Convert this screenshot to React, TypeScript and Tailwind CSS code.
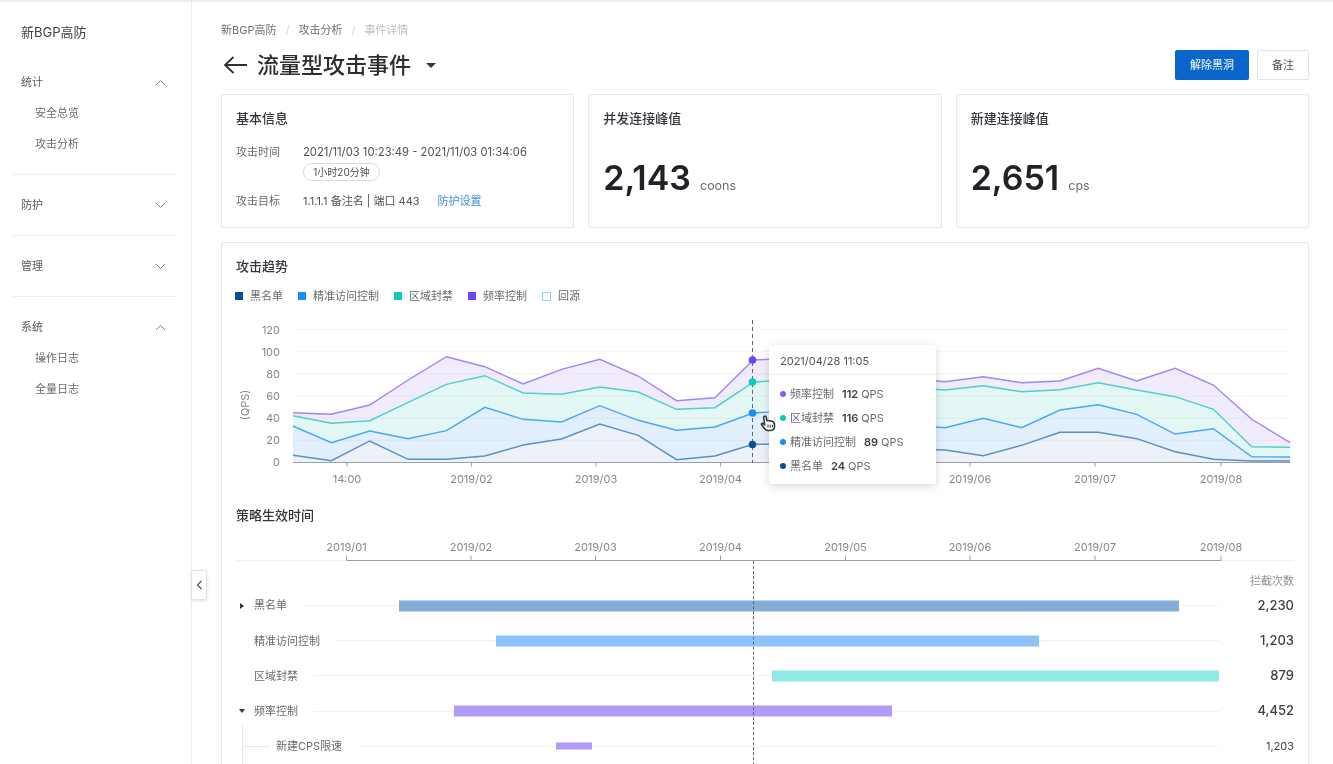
import React from "react";

const X = (i: number) => 293 + i * 38.35;
const BASE = 462.5;

const purple = [412.7, 414.3, 405, 380, 356.7, 366.7, 384, 369.3, 359.3, 376, 400.7, 397.7, 360, 358.3, 365, 372, 378, 381.7, 376.7, 382.7, 381, 368.3, 381, 368.3, 385, 419.3, 442.7];
const teal = [415.7, 423.3, 420.7, 402.3, 384.3, 375.7, 393, 394.3, 387, 392, 409.3, 407.7, 382.3, 379.3, 381, 385, 388, 390, 385.7, 391.7, 389.7, 382.7, 390, 396.7, 409.3, 446.7, 447.3];
const blue = [426, 442.7, 431, 438.7, 430.7, 407.3, 419.3, 422, 405.7, 420.3, 430.3, 427, 413, 410.7, 415, 420, 425, 427.7, 418.3, 427.7, 410, 404.7, 414.3, 434, 428.7, 456.7, 457];
const dark = [455.3, 460.7, 441, 459.3, 459.3, 456, 445, 439, 424, 435.3, 459.7, 456, 444.3, 444, 445, 447, 449, 450, 455.7, 445.3, 432.3, 432.3, 438.7, 451.7, 459.3, 461, 461];

const line = (a: number[]) => a.map((y, i) => `${X(i).toFixed(1)},${y}`).join(" ");
const area = (a: number[]) => `${X(0)},${BASE} ${line(a)} ${X(26).toFixed(1)},${BASE}`;

const series = [
  { data: purple, stroke: "#a582f7", fill: "#f1ecfc", dot: "#6d45f5" },
  { data: teal, stroke: "#4fcfca", fill: "#e3f8f5", dot: "#0ccbbd" },
  { data: blue, stroke: "#4aa5f7", fill: "#e2effd", dot: "#1a8cfb" },
  { data: dark, stroke: "#5b8fc4", fill: "#edf1f8", dot: "#0b4f96" },
];

const chartTicks = [
  { x: 347, t: "14:00" },
  { x: 471.5, t: "2019/02" },
  { x: 596, t: "2019/03" },
  { x: 720.5, t: "2019/04" },
  { x: 845, t: "2019/05" },
  { x: 970, t: "2019/06" },
  { x: 1095, t: "2019/07" },
  { x: 1221, t: "2019/08" },
];
const ganttTicks = [
  { x: 346.5, t: "2019/01" },
  { x: 471, t: "2019/02" },
  { x: 595.5, t: "2019/03" },
  { x: 720.5, t: "2019/04" },
  { x: 845.5, t: "2019/05" },
  { x: 970, t: "2019/06" },
  { x: 1095, t: "2019/07" },
  { x: 1221, t: "2019/08" },
];

const legend = [
  { t: "黑名单", c: "w-[8px] h-[8px] bg-[#0b4f96]" },
  { t: "精准访问控制", c: "w-[8px] h-[8px] bg-[#1a8cfb]" },
  { t: "区域封禁", c: "w-[8px] h-[8px] bg-[#0ccbbd]" },
  { t: "频率控制", c: "w-[8px] h-[8px] bg-[#6d45f5]" },
  { t: "回源", c: "w-[9px] h-[9px] bg-white border border-[#7fdcf0]" },
];

const tips = [
  { t: "频率控制", v: "112", c: "bg-[#8a5cf6]" },
  { t: "区域封禁", v: "116", c: "bg-[#0ccbbd]" },
  { t: "精准访问控制", v: "89", c: "bg-[#1a8cfb]" },
  { t: "黑名单", v: "24", c: "bg-[#0b4f96]" },
];

const rows = [
  { label: "黑名单", caret: "right", from: 399, to: 1179, color: "#85aed6", value: "2,230", h: 11 },
  { label: "精准访问控制", from: 496, to: 1039, color: "#8cc3fb", value: "1,203", h: 11 },
  { label: "区域封禁", from: 772, to: 1219, color: "#8fe9e4", value: "879", h: 11 },
  { label: "频率控制", caret: "down", from: 453.5, to: 892, color: "#b09bfa", value: "4,452", h: 11 },
  { label: "新建CPS限速", child: true, from: 556, to: 592, color: "#b09bfa", value: "1,203", h: 7 },
];

function Chevron({ up }: { up?: boolean }) {
  return (
    <svg width="11" height="7" viewBox="0 0 11 7" fill="none" stroke="#7a7f87" strokeWidth="1">
      <path d={up ? "M1 6 L5.5 1.5 L10 6" : "M1 1 L5.5 5.5 L10 1"} />
    </svg>
  );
}

function MenuGroup({ title, open, items, last, first }: { title: string; open?: boolean; items?: string[]; last?: boolean; first?: boolean }) {
  return (
    <div className={`${first ? "pt-[14px]" : "pt-[15px]"} pb-[14px] ${last ? "" : "border-b border-[#eceef1]"}`}>
      <div className="h-[31px] flex items-center justify-between pl-[8px] pr-[10px] text-[11px] text-[#555a61]">
        <span>{title}</span>
        <Chevron up={open} />
      </div>
      {items?.map((s) => (
        <div key={s} className="h-[31px] flex items-center pl-[22px] text-[11px] text-[#666b72]">
          {s}
        </div>
      ))}
    </div>
  );
}

function Card({ title, children }: { title: string; children: React.ReactNode }) {
  return (
    <div className="h-[134px] rounded-[3px] border border-[#e6e8eb] shadow-[0_0_1px_#e6e8eb] px-[14px] pt-[13px] bg-white">
      <div className="h-[20px] leading-[20px] text-[13px] font-medium text-[#33373d]">{title}</div>
      {children}
    </div>
  );
}

function Stat({ title, value, unit }: { title: string; value: string; unit: string }) {
  return (
    <Card title={title}>
      <div className="mt-[31px] flex items-baseline gap-[9px]">
        <span className="text-[34px] leading-[38px] font-semibold text-[#1f2226]">{value}</span>
        <span className="text-[12.5px] text-[#666b72]">{unit}</span>
      </div>
    </Card>
  );
}

export default function App() {
  return (
    <div className="w-[1333px] h-[764px] overflow-hidden bg-white relative blur-[0.6px] font-['Inter','Noto_Sans_CJK_SC',sans-serif] border-t-2 border-[#ececec]">
      <div className="flex h-full">
        <aside className="w-[192px] shrink-0 border-r border-[#eceef1] pl-[13px] pr-[15px]">
          <div className="pt-[20px] pb-[8px] pl-[8px] h-[51px] leading-[20px] text-[13px] text-[#3d4147]">新BGP高防</div>
          <MenuGroup first title="统计" open items={["安全总览", "攻击分析"]} />
          <MenuGroup title="防护" />
          <MenuGroup title="管理" />
          <MenuGroup title="系统" open items={["操作日志", "全量日志"]} last />
        </aside>

        <main className="w-[1117px] pl-[29px] shrink-0">
          <div className="pt-[21px] h-[35px] flex items-center gap-[9px] text-[11px] text-[#6a6f76]">
            <span>新BGP高防</span>
            <span className="text-[#cfd2d6]">/</span>
            <span>攻击分析</span>
            <span className="text-[#d5d7da]">/</span>
            <span className="text-[#bcbfc4]">事件详情</span>
          </div>

          <div className="mt-[11px] h-[34px] flex items-center justify-between">
            <div className="flex items-center">
              <svg width="26" height="20" viewBox="0 0 26 20" fill="none" stroke="#2b2e33" strokeWidth="1.8" className="ml-[2px]">
                <path d="M24 10 H2 M10.5 2 L2 10 L10.5 18" />
              </svg>
              <span className="ml-[8px] text-[22px] font-medium text-[#2b2e33]">流量型攻击事件</span>
              <span className="ml-[15px] w-0 h-0 border-l-[5px] border-r-[5px] border-t-[5px] border-l-transparent border-r-transparent border-t-[#33373d]" />
            </div>
            <div className="flex gap-[8px]">
              <button className="w-[74px] h-[30px] rounded-[2px] bg-[#0b66cc] text-white text-[11px]">解除黑洞</button>
              <button className="w-[52px] h-[30px] rounded-[2px] bg-white border border-[#e1e3e7] text-[#4a4e55] text-[11px]">备注</button>
            </div>
          </div>

          <div className="mt-[12px] grid grid-cols-3 gap-[14px]">
            <Card title="基本信息">
              <div className="mt-[17px] flex text-[11px] leading-[14px]">
                <span className="w-[67px] text-[#666b72]">攻击时间</span>
                <div className="text-[#4e5259]">
                  <div className="text-[11.25px]">2021/11/03 10:23:49 - 2021/11/03 01:34:06</div>
                  <div className="mt-[4px] h-[18px] w-[77px] flex items-center justify-center rounded-full border border-[#d9dbdf] text-[10px]">1小时20分钟</div>
                </div>
              </div>
              <div className="mt-[13px] flex text-[11px] leading-[14px]">
                <span className="w-[67px] text-[#666b72]">攻击目标</span>
                <span className="text-[#4e5259] text-[11px]">1.1.1.1 备注名 | 端口 443</span>
                <span className="ml-[18px] text-[#3b8fe0]">防护设置</span>
              </div>
            </Card>
            <Stat title="并发连接峰值" value="2,143" unit="coons" />
            <Stat title="新建连接峰值" value="2,651" unit="cps" />
          </div>

          <div className="mt-[14px] h-[600px] rounded-[3px] border border-[#e6e8eb] shadow-[0_0_1px_#e6e8eb] px-[14px] pt-[13px] relative">
            <div className="h-[20px] leading-[20px] text-[13px] font-medium text-[#33373d]">攻击趋势</div>

            <div className="mt-[13px] h-[14px] -ml-[1px] flex items-center gap-[15px] text-[11px] text-[#666b72]">
              {legend.map((l) => (
                <div key={l.t} className="flex items-center gap-[7px]">
                  <span className={l.c} />
                  <span>{l.t}</span>
                </div>
              ))}
            </div>

            <div className="mt-[15px] relative h-[172px]">
              <svg width="1058" height="172" className="block">
                <g transform="translate(-236 -318)">
                  {series.map((s) => (
                    <polygon key={s.stroke} points={area(s.data)} fill={s.fill} />
                  ))}
                  {[329.5, 351.7, 373.8, 396, 418.2, 440.3].map((y) => (
                    <line key={y} x1="293" x2="1290" y1={y} y2={y} stroke="#8a96a8" strokeOpacity="0.1" />
                  ))}
                  {series.map((s) => (
                    <polyline key={s.stroke} points={line(s.data)} fill="none" stroke={s.stroke} strokeWidth="1.4" />
                  ))}
                  <line x1="293" x2="1290" y1={BASE} y2={BASE} stroke="#9aa0a8" strokeWidth="1.2" />
                  {chartTicks.map((t) => (
                    <g key={t.t}>
                      <line x1={t.x} x2={t.x} y1={BASE} y2={BASE + 4} stroke="#9aa0a8" />
                      <text x={t.x} y={483} textAnchor="middle" fontSize="11" fill="#83888f">{t.t}</text>
                    </g>
                  ))}
                  {[120, 100, 80, 60, 40, 20, 0].map((v, i) => (
                    <text key={v} x="280" y={333.5 + i * 22.15} textAnchor="end" fontSize="11" fill="#83888f">{v}</text>
                  ))}
                  <text transform="translate(249 405) rotate(-90)" textAnchor="middle" fontSize="11" fill="#83888f">(QPS)</text>
                  <line x1="752.5" x2="752.5" y1="320" y2="463" stroke="#5f6670" strokeDasharray="4 3" />
                  {series.map((s, i) => (
                    <circle key={s.dot} cx="752.5" cy={[360, 382, 413, 444.5][i]} r="3.8" fill={s.dot} />
                  ))}
                </g>
              </svg>

              <div className="absolute left-[533px] top-[27px] w-[167px] h-[139px] bg-white rounded-[2px] shadow-[0_2px_8px_rgba(40,50,70,0.2)] text-[11px] text-[#666b72]">
                <div className="h-[30px] pl-[11px] pt-[3px] flex items-center border-b border-[#eceef1] text-[#4e5259]">2021/04/28 11:05</div>
                <div className="pt-[7px]">
                  {tips.map((t) => (
                    <div key={t.t} className="h-[24px] flex items-center pl-[11px]">
                      <span className={`w-[6px] h-[6px] rounded-full ${t.c}`} />
                      <span className="ml-[4px]">{t.t}</span>
                      <span className="ml-[8px] font-semibold text-[#3d4147]">{t.v}</span>
                      <span className="ml-[3px]">QPS</span>
                    </div>
                  ))}
                </div>
              </div>

              <svg width="18" height="18" viewBox="0 0 18 18" className="absolute left-[523px] top-[96px]" fill="#fff" stroke="#2f3237" strokeWidth="1.5" strokeLinejoin="round">
                <path d="M5 2.5c.9-.9 2-.4 2.2.6l.6 3.4 4.3.6c2.2.4 3.4 1.6 3.4 3.6v1.8c0 2.2-1.6 3.9-3.9 3.9H9c-1.7 0-2.7-.7-3.6-1.9L2.6 10.8c-.6-.9.5-1.9 1.4-1.2l1.7 1.3L4.7 4c-.1-.6 0-1.1.3-1.5Z" />
                <path d="M9 10.5v3M11.2 10.5v3M13.4 10.8v2.7" fill="none" strokeWidth="1" />
              </svg>
            </div>

            <div className="mt-[15px] h-[20px] leading-[20px] text-[13px] font-medium text-[#33373d]">策略生效时间</div>

            <svg width="1058" height="28" className="block mt-[13px]">
              <g transform="translate(-236 -538)">
                <line x1="236" x2="1294" y1="560.5" y2="560.5" stroke="#f0f1f3" />
                <line x1="346.5" x2="1221" y1="560.5" y2="560.5" stroke="#9aa0a8" strokeWidth="1.2" />
                {ganttTicks.map((t) => (
                  <g key={t.t}>
                    <line x1={t.x} x2={t.x} y1="555.5" y2="560.5" stroke="#9aa0a8" />
                    <text x={t.x} y="551" textAnchor="middle" fontSize="11" fill="#83888f">{t.t}</text>
                  </g>
                ))}
              </g>
            </svg>

            <div className="mt-[9px] h-[13px] leading-[13px] text-right text-[11px] text-[#8a8f96]">拦截次数</div>

            <div className="relative">
              {rows.map((r) => (
                <div key={r.label} className="relative h-[35.2px] flex items-center">
                  <span className="w-[18px] shrink-0 flex justify-center pr-[6px]">
                    {r.caret === "right" && <span className="w-0 h-0 border-t-[3.5px] border-b-[3.5px] border-l-[4px] border-t-transparent border-b-transparent border-l-[#33373d]" />}
                    {r.caret === "down" && <span className="w-0 h-0 border-l-[3.5px] border-r-[3.5px] border-t-[4px] border-l-transparent border-r-transparent border-t-[#33373d]" />}
                  </span>
                  {r.child && <span className="w-[22px] shrink-0" />}
                  <span className="shrink-0 text-[11px] text-[#666b72]">{r.label}</span>
                  <span className="ml-[16px] flex-1 h-px bg-[#f1f2f5]" />
                  <span className={`w-[75px] shrink-0 text-right text-[#3d4147] ${r.child ? "text-[11px] font-normal" : "text-[13px] font-medium"}`}>{r.value}</span>
                  <span
                    className="absolute top-1/2 -translate-y-1/2"
                    style={{ left: r.from - 236, width: r.to - r.from, height: r.h, background: r.color }}
                  />
                </div>
              ))}
              <span className="absolute left-[6px] top-[137px] h-[60px] w-px bg-[#e5e7eb]" />
              <span className="absolute left-[6px] top-[158px] h-px w-[28px] bg-[#e5e7eb]" />
            </div>

            <span className="absolute left-[530.5px] top-[318px] h-[300px] border-l border-dashed border-[#5f6670]" />
          </div>
        </main>
      </div>

      <button className="absolute left-[191px] top-[568px] w-[16px] h-[30px] bg-white border border-[#e1e3e7] rounded-[2px] shadow-[0_1px_3px_rgba(0,0,0,0.12)] flex items-center justify-center">
        <svg width="7" height="10" viewBox="0 0 7 10" fill="none" stroke="#5a5f66" strokeWidth="1.3">
          <path d="M5.5 1 L1.5 5 L5.5 9" />
        </svg>
      </button>
    </div>
  );
}
